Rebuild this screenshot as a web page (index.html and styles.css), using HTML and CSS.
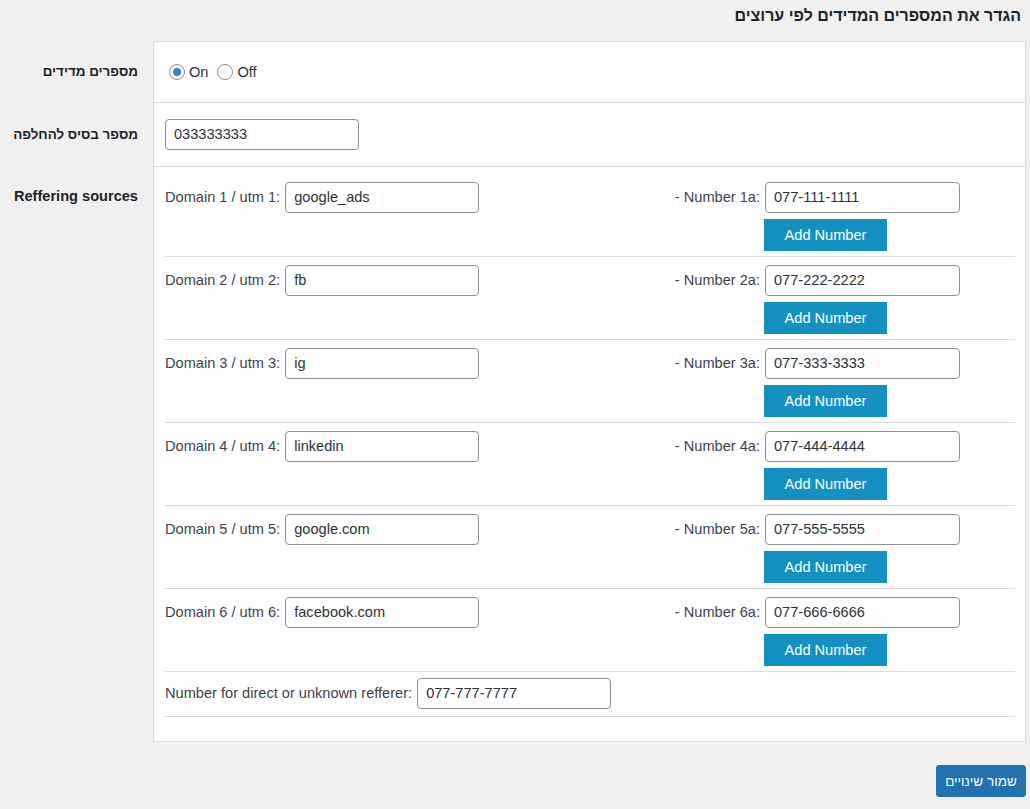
FILE: index.html
```html
<!DOCTYPE html>
<html lang="he">
<head>
<meta charset="utf-8">
<title>Settings</title>
<link rel="stylesheet" href="styles.css">
</head>
<body>
<div class="wrap">
  <h2 class="title"><span dir="rtl">הגדר את המספרים המדידים לפי ערוצים</span></h2>
  <div class="form-grid">
    <div class="th mid"><span class="he" dir="rtl">מספרים מדידים</span></div>
    <div class="td first">
      <div class="radios">
        <span class="radio checked"></span><span class="rlabel">On</span>
        <span class="radio"></span><span class="rlabel">Off</span>
      </div>
    </div>

    <div class="th mid"><span class="he" dir="rtl">מספר בסיס להחלפה</span></div>
    <div class="td td2">
      <div class="input base">033333333</div>
    </div>

    <div class="th top">Reffering sources</div>
    <div class="td td3">
      <div class="src-row">
        <div class="left"><span class="lbl">Domain 1 / utm 1:</span><div class="input">google_ads</div></div>
        <div class="right"><span class="lbl">- Number 1a:</span><div class="input">077-111-1111</div><button class="add">Add Number</button></div>
      </div>
      <div class="src-row">
        <div class="left"><span class="lbl">Domain 2 / utm 2:</span><div class="input">fb</div></div>
        <div class="right"><span class="lbl">- Number 2a:</span><div class="input">077-222-2222</div><button class="add">Add Number</button></div>
      </div>
      <div class="src-row">
        <div class="left"><span class="lbl">Domain 3 / utm 3:</span><div class="input">ig</div></div>
        <div class="right"><span class="lbl">- Number 3a:</span><div class="input">077-333-3333</div><button class="add">Add Number</button></div>
      </div>
      <div class="src-row">
        <div class="left"><span class="lbl">Domain 4 / utm 4:</span><div class="input">linkedin</div></div>
        <div class="right"><span class="lbl">- Number 4a:</span><div class="input">077-444-4444</div><button class="add">Add Number</button></div>
      </div>
      <div class="src-row">
        <div class="left"><span class="lbl">Domain 5 / utm 5:</span><div class="input">google.com</div></div>
        <div class="right"><span class="lbl">- Number 5a:</span><div class="input">077-555-5555</div><button class="add">Add Number</button></div>
      </div>
      <div class="src-row">
        <div class="left"><span class="lbl">Domain 6 / utm 6:</span><div class="input">facebook.com</div></div>
        <div class="right"><span class="lbl">- Number 6a:</span><div class="input">077-666-6666</div><button class="add">Add Number</button></div>
      </div>
      <div class="direct-row">
        <span class="lbl">Number for direct or unknown refferer:</span><div class="input">077-777-7777</div>
      </div>
    </div>
  </div>
  <div class="actions">
    <button class="save"><span dir="rtl">שמור שינויים</span></button>
  </div>
</div>
</body>
</html>
```

FILE: styles.css
```css
* { box-sizing: border-box; }
html, body {
  margin: 0;
  padding: 0;
  background: #f0f0f1;
  font-family: "Liberation Sans", Arial, sans-serif;
  font-size: 14.6px;
  color: #3c434a;
}
.wrap {
  width: 1026px;
}
.title {
  margin: 0;
  height: 41px;
  padding: 6px 5px 0 0;
  font-size: 16px;
  line-height: 20px;
  font-weight: bold;
  color: #1d2327;
  text-align: right;
}
.form-grid {
  display: grid;
  grid-template-columns: 153px 1fr;
}
.th {
  font-weight: bold;
  color: #1d2327;
  text-align: right;
  padding-right: 15px;
  line-height: 20px;
}
.th.mid {
  display: flex;
  align-items: center;
  justify-content: flex-end;
}
.he {
  font-size: 13.4px;
}
.th.top {
  padding-top: 19px;
}
.td {
  background: #fff;
  border-left: 1px solid #dcdcde;
  border-right: 1px solid #dcdcde;
  border-bottom: 1px solid #dcdcde;
}
.td.first {
  border-top: 1px solid #dcdcde;
  height: 62px;
  display: flex;
  align-items: center;
  padding-left: 15px;
}
.radios {
  display: flex;
  align-items: center;
  line-height: 20px;
  color: #2c3338;
}
.radio {
  width: 16px;
  height: 16px;
  border: 1px solid #8c8f94;
  border-radius: 50%;
  display: inline-flex;
  align-items: center;
  justify-content: center;
  background: #fff;
}
.radio.checked::before {
  content: "";
  width: 8px;
  height: 8px;
  border-radius: 50%;
  background: #3582c4;
}
.rlabel {
  margin-left: 4px;
  margin-right: 9px;
}
.td2 {
  padding: 16px 11px 16px 11px;
}
.input {
  width: 194px;
  height: 31px;
  border: 1px solid #8c8f94;
  border-radius: 4px;
  background: #fff;
  padding: 0 8px;
  line-height: 29px;
  color: #2c3338;
}
.td3 {
  padding: 7px 10px 24px 10px;
}
.src-row {
  display: flex;
  justify-content: space-between;
  align-items: flex-start;
  padding: 8px 0 6px 0;
  border-bottom: 1px solid #dcdcde;
  height: 83px;
}
.lbl {
  line-height: 31px;
  white-space: nowrap;
}
.left {
  display: flex;
  align-items: flex-start;
  gap: 5px;
  padding-left: 1px;
}
.right {
  display: grid;
  grid-template-columns: auto 195px;
  column-gap: 5px;
  row-gap: 6px;
  margin-right: 55px;
}
.right .lbl {
  text-align: right;
}
.right .input {
  width: 195px;
}
.add {
  grid-column: 2;
  justify-self: start;
  margin-left: -1px;
  width: 123px;
  height: 32px;
  border: 0;
  background: #1591c1;
  color: #fff;
  font-family: "Liberation Sans", Arial, sans-serif;
  font-size: 14.6px;
  padding: 0;
  cursor: pointer;
}
.direct-row {
  display: flex;
  align-items: flex-start;
  gap: 5px;
  padding: 8px 0 7px 1px;
  border-bottom: 1px solid #dcdcde;
  margin-top: -2px;
}
.actions {
  display: flex;
  justify-content: flex-end;
  padding-top: 23px;
}
.save {
  width: 90px;
  height: 32px;
  border: 1px solid #2271b1;
  border-radius: 3px;
  background: #2271b1;
  color: #fff;
  font-family: "Liberation Sans", Arial, sans-serif;
  font-size: 13.5px;
  padding: 0;
}
```
